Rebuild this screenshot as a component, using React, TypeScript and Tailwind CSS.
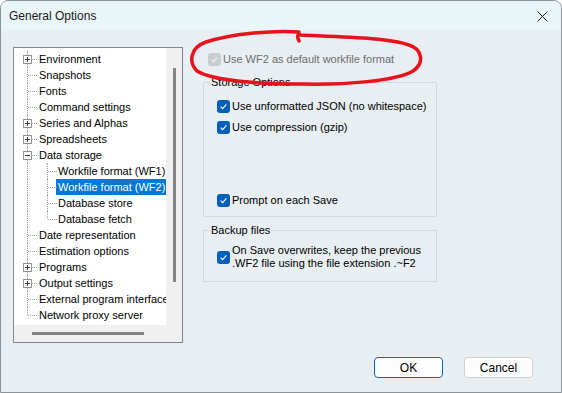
import React from "react";

type Node = { label: string; depth: number; box?: "+" | "-"; selected?: boolean };

const TREE: Node[] = [
  { label: "Environment", depth: 0, box: "+" },
  { label: "Snapshots", depth: 0 },
  { label: "Fonts", depth: 0 },
  { label: "Command settings", depth: 0 },
  { label: "Series and Alphas", depth: 0, box: "+" },
  { label: "Spreadsheets", depth: 0, box: "+" },
  { label: "Data storage", depth: 0, box: "-" },
  { label: "Workfile format (WF1)", depth: 1 },
  { label: "Workfile format (WF2)", depth: 1, selected: true },
  { label: "Database store", depth: 1 },
  { label: "Database fetch", depth: 1 },
  { label: "Date representation", depth: 0 },
  { label: "Estimation options", depth: 0 },
  { label: "Programs", depth: 0, box: "+" },
  { label: "Output settings", depth: 0, box: "+" },
  { label: "External program interface", depth: 0 },
  { label: "Network proxy server", depth: 0 },
];

function ExpandBox({ sign }: { sign: "+" | "-" }) {
  return (
    <svg width="9" height="9" viewBox="0 0 9 9" className="absolute left-[9px] top-[4px]">
      <rect x="0.5" y="0.5" width="8" height="8" fill="#fff" stroke="#919191" />
      <line x1="2" y1="4.5" x2="7" y2="4.5" stroke="#333" />
      {sign === "+" && <line x1="4.5" y1="2" x2="4.5" y2="7" stroke="#333" />}
    </svg>
  );
}

function TreeRow({ node, last, childLast }: { node: Node; last: boolean; childLast: boolean }) {
  return (
    <div className="relative h-[16px] flex items-center">
      {/* top-level vertical guide */}
      <div
        className={`absolute left-[13px] top-0 border-l border-dotted border-[#a0a0a0] ${last ? "h-[8px]" : "h-[16px]"}`}
      />
      {node.depth === 0 ? (
        <div className="absolute left-[14px] top-[8px] w-[9px] border-t border-dotted border-[#a0a0a0]" />
      ) : (
        <>
          <div
            className={`absolute left-[33px] top-0 border-l border-dotted border-[#a0a0a0] ${childLast ? "h-[8px]" : "h-[16px]"}`}
          />
          <div className="absolute left-[34px] top-[8px] w-[9px] border-t border-dotted border-[#a0a0a0]" />
        </>
      )}
      {node.box && <ExpandBox sign={node.box} />}
      <span
        className={`whitespace-nowrap leading-[16px] ${
          node.depth === 0 ? "ml-[24px] pl-[1px]" : "ml-[42px] pl-[2px] pr-[2px]"
        } ${node.selected ? "bg-[#0078d7] text-white" : "text-black"}`}
      >
        {node.label}
      </span>
    </div>
  );
}

function Check({ disabled }: { disabled?: boolean }) {
  return (
    <span
      className={`inline-flex w-[13px] h-[13px] shrink-0 items-center justify-center rounded-[3px] ${
        disabled ? "bg-[#c9cdd1]" : "bg-[#005fb8]"
      }`}
    >
      <svg width="9" height="9" viewBox="0 0 9 9">
        <path
          d="M1.6 4.7 L3.6 6.6 L7.4 2.4"
          fill="none"
          stroke={disabled ? "#eef0f2" : "#fff"}
          strokeWidth="1.1"
        />
      </svg>
    </span>
  );
}

function Group({ title, className, children }: { title: string; className: string; children: React.ReactNode }) {
  return (
    <div className={`border border-[#d4d9dd] rounded-[1px] pl-[13px] flex flex-col ${className}`}>
      <span className="self-start -mt-[8px] -ml-[6px] h-[14px] leading-[14px] bg-[#e8eef2] pr-[1px] text-black">
        {title}
      </span>
      {children}
    </div>
  );
}

export default function App() {
  return (
    <div
      className="relative w-[562px] h-[393px] flex flex-col overflow-hidden rounded-t-[8px] border border-[#8d9399] bg-[#e8eef2] text-[11px] text-black"
      style={{ fontFamily: '"Liberation Sans", Arial, sans-serif' }}
    >
      {/* Title bar */}
      <div className="h-[30px] shrink-0 flex items-center justify-between bg-[#e9f6f8] pl-[8px] pr-[13px]">
        <span className="text-[12px] text-[#1a1a1a]">General Options</span>
        <svg width="11" height="11" viewBox="0 0 11 11">
          <path d="M0.5 0.5 L10.5 10.5 M10.5 0.5 L0.5 10.5" stroke="#222" strokeWidth="1" />
        </svg>
      </div>

      <div className="flex-1 flex flex-col pl-[12px] pt-[16px]">
        <div className="flex gap-[20px]">
          {/* Tree view */}
          <div className="w-[170px] h-[296px] border border-[#828790] bg-[#f0f0f0] grid grid-cols-[152px_16px] grid-rows-[277px_17px]">
            <div className="bg-white overflow-hidden pt-[3px]">
              {TREE.map((n, i) => (
                <TreeRow
                  key={n.label}
                  node={n}
                  last={i === TREE.length - 1}
                  childLast={n.label === "Database fetch"}
                />
              ))}
            </div>
            <div className="flex justify-center pt-[20px]">
              <div className="w-[3px] h-[214px] bg-[#858585]" />
            </div>
            <div className="flex items-center pl-[18px]">
              <div className="h-[3px] w-[112px] bg-[#858585]" />
            </div>
            <div />
          </div>

          {/* Right pane */}
          <div className="w-[234px] flex flex-col">
            <label className="flex items-center gap-[2px] h-[14px] mt-[5px] ml-[5px] text-[#6d6d6d]">
              <Check disabled />
              <span>Use WF2 as default workfile format</span>
            </label>

            <Group title="Storage Options" className="h-[135px] mt-[16px] pb-[8px]">
              <label className="flex items-center gap-[2px] h-[16px] mt-[9px]">
                <Check />
                <span>Use unformatted JSON (no whitespace)</span>
              </label>
              <label className="flex items-center gap-[2px] h-[16px] mt-[5px]">
                <Check />
                <span>Use compression (gzip)</span>
              </label>
              <label className="flex items-center gap-[2px] h-[16px] mt-auto">
                <Check />
                <span>Prompt on each Save</span>
              </label>
            </Group>

            <Group title="Backup files" className="h-[52px] mt-[13px]">
              <label className="flex items-center gap-[2px] mt-[7px]">
                <Check />
                <span className="leading-[13px]">
                  On Save overwrites, keep the previous
                  <br />
                  .WF2 file using the file extension .~F2
                </span>
              </label>
            </Group>
          </div>
        </div>

        {/* Buttons */}
        <div className="flex justify-end gap-[21px] mt-[14px] pr-[28px]">
          <button className="w-[69px] h-[21px] rounded-[4px] border border-[#0067c0] bg-[#fdfdfd] text-[12px] leading-none">
            OK
          </button>
          <button className="w-[69px] h-[21px] rounded-[4px] border border-[#d0d0d0] bg-[#fdfdfd] text-[12px] leading-none">
            Cancel
          </button>
        </div>
      </div>

      {/* Red annotation drawn over the dialog */}
      <svg
        className="absolute left-0 top-0 pointer-events-none"
        width="562"
        height="393"
        viewBox="0 0 562 393"
      >
        <path
          d="M298 31 C270 29 230 33 205 41 C188 47 188 62 196 70 C212 80 260 83 300 83 C345 84 395 80 412 70 C424 62 421 48 408 44 C390 37 345 36 300 34 C296 32 296 36 298 40"
          fill="none"
          stroke="#e8121c"
          strokeWidth="3.5"
          strokeLinecap="round"
        />
      </svg>
    </div>
  );
}
